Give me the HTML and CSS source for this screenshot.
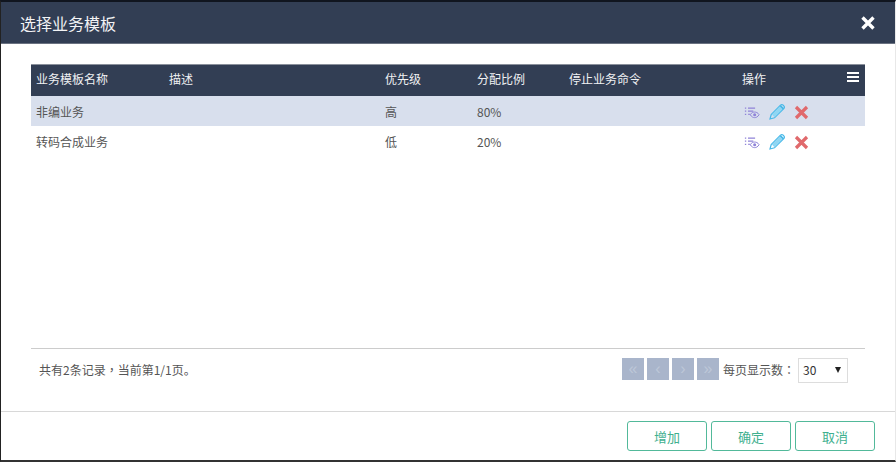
FILE: index.html
```html
<!DOCTYPE html>
<html lang="zh-CN">
<head>
    <meta charset="UTF-8">
    <title>选择业务模板</title>
    <link rel="stylesheet" href="styles.css">
</head>
<body>
    <div class="dialog">
        <div class="dialog-head">
            <span class="dialog-title">选择业务模板</span>
            <svg class="close-icon" width="16" height="16" viewBox="0 0 16 16">
                <path d="M2.5 2.5L13.5 13.5M13.5 2.5L2.5 13.5" stroke="#fff" stroke-width="3.4" fill="none"/>
            </svg>
        </div>
        <div class="dialog-body">
            <div class="table-area">
                <table class="grid">
                    <colgroup>
                        <col class="col-name"><col class="col-desc"><col class="col-level"><col class="col-ratio"><col class="col-cmd"><col class="col-ops">
                    </colgroup>
                    <thead>
                        <tr>
                            <th>业务模板名称</th>
                            <th>描述</th>
                            <th>优先级</th>
                            <th>分配比例</th>
                            <th>停止业务命令</th>
                            <th>
                                <div class="ops-head">
                                    <span>操作</span>
                                    <span class="menu-icon"><i></i><i></i><i></i></span>
                                </div>
                            </th>
                        </tr>
                    </thead>
                    <tbody>
                        <tr class="selected">
                            <td>非编业务</td>
                            <td></td>
                            <td>高</td>
                            <td>80%</td>
                            <td></td>
                            <td>
                                <div class="ops">
                                    <svg class="view-icon" width="16" height="13" viewBox="0 0 18 14"><use href="#icon-view"/></svg>
                                    <svg width="18" height="18" viewBox="0 0 18 18"><use href="#icon-edit"/></svg>
                                    <svg width="15" height="15" viewBox="0 0 15 15"><use href="#icon-del"/></svg>
                                </div>
                            </td>
                        </tr>
                        <tr>
                            <td>转码合成业务</td>
                            <td></td>
                            <td>低</td>
                            <td>20%</td>
                            <td></td>
                            <td>
                                <div class="ops">
                                    <svg class="view-icon" width="16" height="13" viewBox="0 0 18 14"><use href="#icon-view"/></svg>
                                    <svg width="18" height="18" viewBox="0 0 18 18"><use href="#icon-edit"/></svg>
                                    <svg width="15" height="15" viewBox="0 0 15 15"><use href="#icon-del"/></svg>
                                </div>
                            </td>
                        </tr>
                    </tbody>
                </table>
            </div>
            <div class="pager">
                <span class="pager-info">共有2条记录<span class="punct" lang="zh-TW">，</span>当前第1/1页。</span>
                <div class="pager-right">
                    <span class="page-btn">«</span>
                    <span class="page-btn">‹</span>
                    <span class="page-btn">›</span>
                    <span class="page-btn">»</span>
                    <span class="page-size-label">每页显示数<span class="punct" lang="zh-TW">：</span></span>
                    <div class="page-size"><span>30</span><span class="arrow"></span></div>
                </div>
            </div>
        </div>
        <div class="dialog-foot">
            <button class="btn">增加</button>
            <button class="btn">确定</button>
            <button class="btn">取消</button>
        </div>
    </div>

    <svg class="icon-defs" width="0" height="0">
        <defs>
            <g id="icon-view">
                <path d="M1 2h1.5M1 5.5h1.5M1 9h1.5" stroke="#8f83d8" stroke-width="1.4" fill="none"/>
                <path d="M4.5 2h8M4.5 5.5h6M4.5 9h2.5" stroke="#8f83d8" stroke-width="1.3" fill="none"/>
                <path d="M7 9.500C8.500 7 10.500 6.500 12 6.500S15.500 7 17 9.500C15.500 12 13.500 12.800 12 12.800S8.500 12 7 9.500Z" stroke="#8f83d8" stroke-width="1.100" fill="none"/>
                <circle cx="12" cy="9.500" r="1.700" fill="#8f83d8"/>
            </g>
            <g id="icon-edit">
                <path d="M2 16L3.200 11.500L12.500 2.200C13.300 1.400 14.400 1.400 15.200 2.200L15.800 2.800C16.600 3.600 16.600 4.700 15.800 5.500L6.500 14.800Z" fill="none" stroke="#45b8e8" stroke-width="1.200"/>
                <path d="M3.800 11.500L11.800 3.500L14.500 6.200L6.500 14.200Z" fill="#8fd6f3"/>
                <path d="M12.800 2L16 5.200L14.800 6.400L11.600 3.200Z" fill="#45b8e8"/>
            </g>
            <g id="icon-del">
                <path d="M2 2L13 13M13 2L2 13" stroke="#e0696c" stroke-width="3.200" fill="none"/>
            </g>
        </defs>
    </svg>
</body>
</html>
```

FILE: styles.css
```css
html, body {
    margin: 0;
    padding: 0;
}
body {
    width: 896px;
    height: 462px;
    overflow: hidden;
    background-color: #fff;
    font-family: "Noto Sans CJK SC", "Open Sans", sans-serif;
    font-size: 12px;
    color: #555;
}
.dialog {
    box-sizing: border-box;
    width: 896px;
    height: 462px;
    display: flex;
    flex-direction: column;
    background-color: #fff;
    border-top: 2px solid #10151f;
    border-left: 1px solid #222;
    border-right: 1px solid #e8e8e8;
    border-bottom: 2px solid #333;
}
.dialog-head {
    height: 41px;
    flex: none;
    display: flex;
    align-items: center;
    justify-content: space-between;
    padding: 0 19px;
    background-color: #323e54;
    border-bottom: 1px solid #6a7281;
}
.dialog-title {
    font-size: 16px;
    color: #f2f3f5;
}
.close-icon {
    display: block;
}
.dialog-body {
    flex: 1;
    display: flex;
    flex-direction: column;
    padding: 20px 30px 0 30px;
    min-height: 0;
}
.table-area {
    height: 284px;
    flex: none;
    border-bottom: 1px solid #ccc;
}
.grid {
    width: 834px;
    table-layout: fixed;
    border-collapse: collapse;
}
.col-name { width: 133px; }
.col-desc { width: 216px; }
.col-level { width: 92px; }
.col-ratio { width: 92px; }
.col-cmd { width: 173px; }
.col-ops { width: 128px; }
.grid th {
    height: 31px;
    padding: 5px 5px 0 5px;
    box-sizing: border-box;
    vertical-align: top;
    text-align: left;
    font-weight: normal;
    color: #f0f1f3;
    background-color: #323e54;
    border-top: 1px solid #8a909b;
}
.grid td {
    box-sizing: border-box;
    height: 30px;
    padding: 2px 5px 0 5px;
}
.grid .selected td {
    background-color: #d8dfed;
}
.ops-head {
    display: flex;
    justify-content: space-between;
    align-items: flex-start;
}
.menu-icon {
    display: flex;
    flex-direction: column;
    gap: 2px;
    margin-top: 2px;
    padding-right: 1px;
}
.menu-icon i {
    display: block;
    width: 12px;
    height: 2px;
    background-color: #fff;
}
.ops {
    display: flex;
    align-items: center;
    gap: 8px;
    margin-top: 1px;
}
.view-icon {
    margin-left: 2px;
}
.punct {
    font-family: "Noto Sans CJK TC", sans-serif;
}
.pager {
    display: flex;
    justify-content: space-between;
    align-items: center;
    height: 40px;
    padding: 0 17px 0 8px;
    color: #555;
}
.pager-info {
    margin-top: 1px;
}
.pager-right {
    display: flex;
    align-items: center;
}
.page-btn {
    width: 22px;
    height: 22px;
    margin-right: 3px;
    display: flex;
    align-items: center;
    justify-content: center;
    background-color: #a9b5cb;
    color: #bdc7d8;
    font-family: "Liberation Sans", sans-serif;
    font-size: 16px;
    line-height: 1;
}
.page-size-label {
    margin: 1px 3px 0 1px;
}
.page-size {
    box-sizing: border-box;
    width: 50px;
    height: 25px;
    margin-top: 2px;
    display: flex;
    justify-content: space-between;
    align-items: center;
    padding: 0 6px 1px 4px;
    border: 1px solid #ddd;
    color: #333;
}
.arrow {
    width: 0;
    height: 0;
    border-left: 3.5px solid transparent;
    border-right: 3.5px solid transparent;
    border-top: 6px solid #222;
}
.dialog-foot {
    height: 48px;
    flex: none;
    display: flex;
    justify-content: flex-end;
    align-items: center;
    gap: 4px;
    padding: 0 20px 0 0;
    border-top: 1px solid #d8d8d8;
}
.btn {
    box-sizing: border-box;
    width: 80px;
    height: 30px;
    padding: 0;
    background-color: #fff;
    border: 1px solid #52b99a;
    border-radius: 3px;
    color: #3fb08f;
    font-family: inherit;
    font-size: 13px;
}
.icon-defs {
    display: block;
    position: absolute;
}
```
